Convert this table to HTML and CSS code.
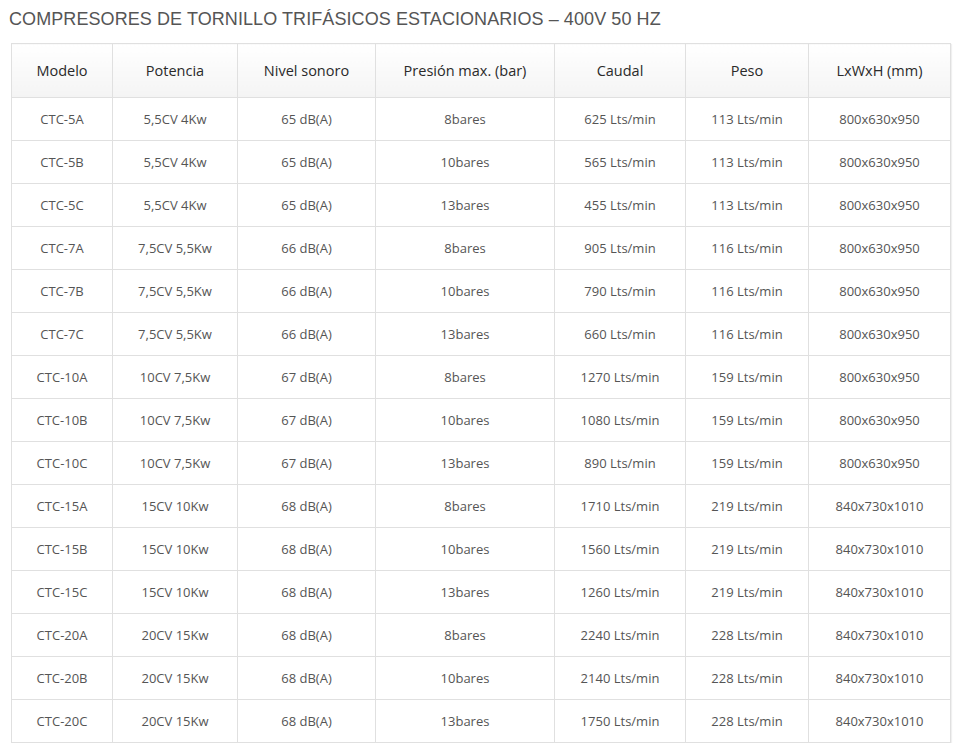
FILE: index.html
```html
<!DOCTYPE html>
<html lang="es">
<head>
<meta charset="utf-8">
<title>Compresores</title>
<link rel="stylesheet" href="styles.css">
</head>
<body>
<h2 class="title">COMPRESORES DE TORNILLO TRIFÁSICOS ESTACIONARIOS – 400V 50 HZ</h2>
<table class="specs">
<colgroup>
<col class="c1"><col class="c2"><col class="c3"><col class="c4"><col class="c5"><col class="c6"><col class="c7">
</colgroup>
<thead>
<tr><th>Modelo</th><th>Potencia</th><th>Nivel sonoro</th><th>Presión max. (bar)</th><th>Caudal</th><th>Peso</th><th>LxWxH (mm)</th></tr>
</thead>
<tbody>
<tr><td>CTC-5A</td><td>5,5CV 4Kw</td><td>65 dB(A)</td><td>8bares</td><td>625 Lts/min</td><td>113 Lts/min</td><td>800x630x950</td></tr>
<tr><td>CTC-5B</td><td>5,5CV 4Kw</td><td>65 dB(A)</td><td>10bares</td><td>565 Lts/min</td><td>113 Lts/min</td><td>800x630x950</td></tr>
<tr><td>CTC-5C</td><td>5,5CV 4Kw</td><td>65 dB(A)</td><td>13bares</td><td>455 Lts/min</td><td>113 Lts/min</td><td>800x630x950</td></tr>
<tr><td>CTC-7A</td><td>7,5CV 5,5Kw</td><td>66 dB(A)</td><td>8bares</td><td>905 Lts/min</td><td>116 Lts/min</td><td>800x630x950</td></tr>
<tr><td>CTC-7B</td><td>7,5CV 5,5Kw</td><td>66 dB(A)</td><td>10bares</td><td>790 Lts/min</td><td>116 Lts/min</td><td>800x630x950</td></tr>
<tr><td>CTC-7C</td><td>7,5CV 5,5Kw</td><td>66 dB(A)</td><td>13bares</td><td>660 Lts/min</td><td>116 Lts/min</td><td>800x630x950</td></tr>
<tr><td>CTC-10A</td><td>10CV 7,5Kw</td><td>67 dB(A)</td><td>8bares</td><td>1270 Lts/min</td><td>159 Lts/min</td><td>800x630x950</td></tr>
<tr><td>CTC-10B</td><td>10CV 7,5Kw</td><td>67 dB(A)</td><td>10bares</td><td>1080 Lts/min</td><td>159 Lts/min</td><td>800x630x950</td></tr>
<tr><td>CTC-10C</td><td>10CV 7,5Kw</td><td>67 dB(A)</td><td>13bares</td><td>890 Lts/min</td><td>159 Lts/min</td><td>800x630x950</td></tr>
<tr><td>CTC-15A</td><td>15CV 10Kw</td><td>68 dB(A)</td><td>8bares</td><td>1710 Lts/min</td><td>219 Lts/min</td><td>840x730x1010</td></tr>
<tr><td>CTC-15B</td><td>15CV 10Kw</td><td>68 dB(A)</td><td>10bares</td><td>1560 Lts/min</td><td>219 Lts/min</td><td>840x730x1010</td></tr>
<tr><td>CTC-15C</td><td>15CV 10Kw</td><td>68 dB(A)</td><td>13bares</td><td>1260 Lts/min</td><td>219 Lts/min</td><td>840x730x1010</td></tr>
<tr><td>CTC-20A</td><td>20CV 15Kw</td><td>68 dB(A)</td><td>8bares</td><td>2240 Lts/min</td><td>228 Lts/min</td><td>840x730x1010</td></tr>
<tr><td>CTC-20B</td><td>20CV 15Kw</td><td>68 dB(A)</td><td>10bares</td><td>2140 Lts/min</td><td>228 Lts/min</td><td>840x730x1010</td></tr>
<tr><td>CTC-20C</td><td>20CV 15Kw</td><td>68 dB(A)</td><td>13bares</td><td>1750 Lts/min</td><td>228 Lts/min</td><td>840x730x1010</td></tr>
</tbody>
</table>
</body>
</html>
```
FILE: styles.css
```css
html, body {
  margin: 0;
  padding: 0;
  background: #fff;
}
body {
  padding: 0 0 0 11px;
}
.title {
  margin: 0 0 0 -2px;
  padding: 9px 0 0 0;
  height: 34px;
  box-sizing: border-box;
  font-family: "Liberation Sans", Arial, sans-serif;
  font-weight: normal;
  font-size: 18px;
  letter-spacing: 0.08px;
  line-height: 20px;
  color: #555;
}
.specs {
  border-collapse: collapse;
  table-layout: fixed;
  width: 939px;
  margin-top: 9px;
  font-family: "Open Sans", sans-serif;
  box-shadow: 1px 1px 1px rgba(0,0,0,0.06);
}
.c1 { width: 101px; }
.c2 { width: 125px; }
.c3 { width: 138px; }
.c4 { width: 179px; }
.c5 { width: 131px; }
.c6 { width: 123px; }
.c7 { width: 142px; }
.specs th, .specs td {
  border: 1px solid #e0e0e0;
  text-align: center;
  padding: 0;
}
.specs th {
  height: 53px;
  font-size: 14.5px;
  font-weight: normal;
  color: #2a2a2a;
  background: linear-gradient(#ffffff, #f4f4f4);
}
.specs td {
  height: 42px;
  font-size: 13px;
  color: #555;
}
```
